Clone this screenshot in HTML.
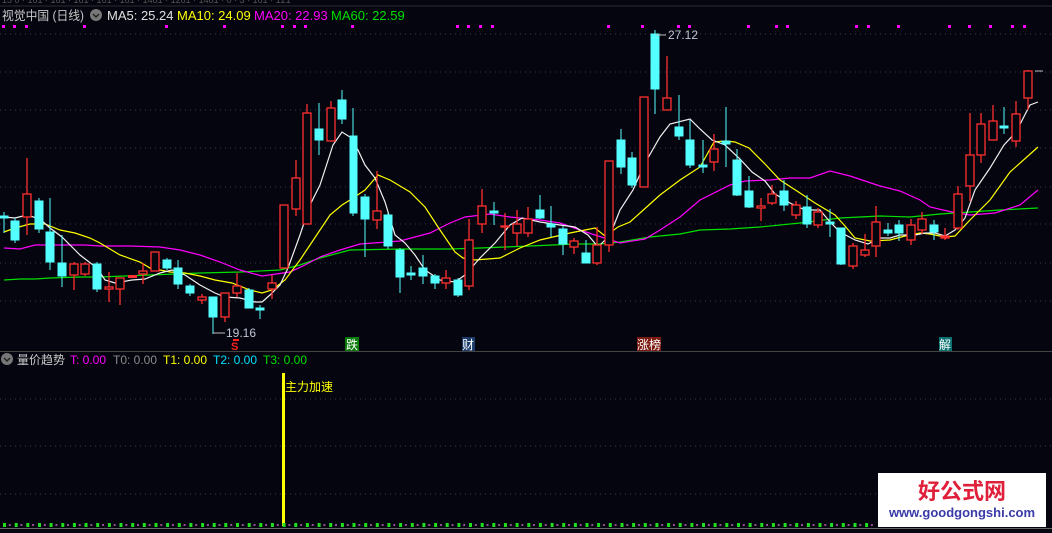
<!DOCTYPE html>
<html><head><meta charset="utf-8"><style>
html,body{margin:0;padding:0;background:#05050f;width:1052px;height:533px;overflow:hidden}
svg{display:block}
text{font-family:"Liberation Sans","Noto Sans CJK SC",sans-serif}
</style></head><body>
<svg width="1052" height="533" viewBox="0 0 1052 533" xmlns="http://www.w3.org/2000/svg">
<rect width="1052" height="533" fill="#05050f"/>
<line x1="0" y1="6" x2="1052" y2="6" stroke="#2a2a33"/>
<g fill="#555" font-size="9"><text x="2" y="3">15 0 · 161 · 161 · 161 · 161 · 161 · 1461 · 1261 · 1461 · 0 · 3 · 161 · 121</text></g>
<text x="2" y="20" font-size="12.5" fill="#c8c8c8" textLength="82" lengthAdjust="spacingAndGlyphs">视觉中国 (日线)</text>
<circle cx="96" cy="15" r="6" fill="#777"/><path d="M93 14l3 3 3-3" stroke="#222" stroke-width="1.5" fill="none"/>
<text x="107" y="20" font-size="13" fill="#e0e0e0">MA5: 25.24</text>
<text x="177" y="20" font-size="13" fill="#ffff00">MA10: 24.09</text>
<text x="254" y="20" font-size="13" fill="#ff00ff">MA20: 22.93</text>
<text x="331" y="20" font-size="13" fill="#00e000">MA60: 22.59</text>
<g fill="#ff00ff">
<rect x="2" y="25" width="3" height="3"/><rect x="13" y="25" width="3" height="3"/><rect x="25" y="25" width="3" height="3"/><rect x="83" y="25" width="3" height="3"/><rect x="165" y="25" width="3" height="3"/><rect x="223" y="25" width="3" height="3"/><rect x="281" y="25" width="3" height="3"/><rect x="293" y="25" width="3" height="3"/><rect x="304" y="25" width="3" height="3"/><rect x="351" y="25" width="3" height="3"/><rect x="456" y="25" width="3" height="3"/><rect x="467" y="25" width="3" height="3"/><rect x="479" y="25" width="3" height="3"/><rect x="491" y="25" width="3" height="3"/><rect x="607" y="25" width="3" height="3"/><rect x="641" y="25" width="3" height="3"/><rect x="677" y="25" width="3" height="3"/><rect x="688" y="25" width="3" height="3"/><rect x="747" y="25" width="3" height="3"/><rect x="775" y="25" width="3" height="3"/><rect x="786" y="25" width="3" height="3"/><rect x="855" y="25" width="3" height="3"/><rect x="867" y="25" width="3" height="3"/><rect x="897" y="25" width="3" height="3"/><rect x="948" y="25" width="3" height="3"/><rect x="968" y="25" width="3" height="3"/><rect x="989" y="25" width="3" height="3"/><rect x="1011" y="25" width="3" height="3"/><rect x="1023" y="25" width="3" height="3"/>
</g>
<g stroke="#3a3a48" stroke-dasharray="1,4">
<line x1="0" y1="34" x2="1052" y2="34"/><line x1="0" y1="72" x2="1052" y2="72"/><line x1="0" y1="110" x2="1052" y2="110"/><line x1="0" y1="148" x2="1052" y2="148"/><line x1="0" y1="187" x2="1052" y2="187"/><line x1="0" y1="224" x2="1052" y2="224"/><line x1="0" y1="263" x2="1052" y2="263"/><line x1="0" y1="301" x2="1052" y2="301"/>
<line x1="0" y1="399" x2="1052" y2="399"/><line x1="0" y1="446" x2="1052" y2="446"/><line x1="0" y1="494" x2="878" y2="494"/>
</g>
<g fill="none" stroke-width="1.2">
<polyline stroke="#00e000" points="4,280 20,279 35,279 50,278 80,277 100,277 150,275 200,273 240,272 280,270 300,265 320,258 350,250 400,249 450,249 480,248 530,246 575,244 600,244 620,242 650,237 680,234 700,230 730,229 760,227 800,223 840,218 880,216 910,217 940,214 970,212 1000,210 1038,208"/>
<polyline stroke="#ff00ff" points="4,248 20,249 35,245 60,245 85,245 100,246 130,246 160,247 180,250 200,255 220,262 240,270 262,276 290,272 305,265 320,257 340,250 360,244 400,241 430,233 450,223 465,217 490,214 510,217 540,220 560,223 580,230 595,235 620,243 645,239 660,230 680,217 700,200 730,185 745,181 770,180 790,178 810,178 830,171 850,176 880,186 900,191 920,200 930,207 952,212 970,215 995,213 1020,205 1038,190"/>
<polyline stroke="#ffff00" points="4,232 15,228 30,224 45,224 60,230 75,233 90,238 100,243 120,255 140,262 150,268 170,272 185,273 200,276 215,280 232,283 250,290 262,293 272,290 285,280 300,260 310,245 330,215 342,205 350,200 365,190 378,175 390,180 410,192 425,207 440,230 455,252 463,258 475,260 500,258 520,248 540,240 570,233 595,228 605,236 618,227 630,222 640,213 660,195 680,180 700,167 714,142 725,141 735,142 749,148 765,164 780,180 800,193 815,203 835,215 845,226 855,238 870,241 890,240 905,236 920,233 930,234 945,237 955,236 970,220 990,200 1010,172 1038,147"/>
<polyline stroke="#f0f0f0" points="4,217 15,218 27,215 40,219 50,228 62,237 72,247 80,255 97,268 105,280 115,283 132,280 145,279 160,273 172,270 185,275 200,285 215,293 225,297 240,298 255,302 262,302 270,295 280,285 288,268 300,235 310,205 320,185 333,145 342,132 350,137 358,150 365,165 375,178 385,202 395,235 405,243 415,255 425,270 440,280 455,282 465,275 480,258 495,243 510,225 522,218 540,222 560,225 575,227 588,235 598,247 610,235 620,210 633,190 645,163 660,137 670,124 690,119 700,129 712,140 725,145 740,159 752,172 765,181 775,194 790,203 805,210 820,210 830,222 840,232 855,240 868,244 880,238 890,238 900,235 915,235 925,233 935,233 945,236 955,230 965,218 975,190 990,168 1004,145 1016,132 1030,105 1038,102"/>
</g>
<g fill="#54ffff" stroke="#54ffff" stroke-width="1">
<line x1="4" y1="212" x2="4" y2="233"/><rect x="0" y="216" width="8" height="2"/>
<line x1="15" y1="218" x2="15" y2="243"/><rect x="11" y="221" width="8" height="19"/>
<line x1="39" y1="198" x2="39" y2="233"/><rect x="35" y="201" width="8" height="28"/>
<line x1="50" y1="198" x2="50" y2="270"/><rect x="46" y="232" width="8" height="30"/>
<line x1="62" y1="235" x2="62" y2="287"/><rect x="58" y="263" width="8" height="13"/>
<line x1="97" y1="262" x2="97" y2="292"/><rect x="93" y="264" width="8" height="25"/>
<line x1="167" y1="258" x2="167" y2="270"/><rect x="163" y="260" width="8" height="8"/>
<line x1="178" y1="260" x2="178" y2="289"/><rect x="174" y="268" width="8" height="16"/>
<line x1="190" y1="284" x2="190" y2="296"/><rect x="186" y="286" width="8" height="7"/>
<line x1="213" y1="297" x2="213" y2="334"/><rect x="209" y="297" width="8" height="20"/>
<line x1="249" y1="288" x2="249" y2="308"/><rect x="245" y="290" width="8" height="18"/>
<line x1="260" y1="305" x2="260" y2="319"/><rect x="256" y="308" width="8" height="2"/>
<line x1="319" y1="103" x2="319" y2="155"/><rect x="315" y="129" width="8" height="11"/>
<line x1="342" y1="90" x2="342" y2="124"/><rect x="338" y="100" width="8" height="19"/>
<line x1="353" y1="108" x2="353" y2="216"/><rect x="350" y="136" width="7" height="77"/>
<line x1="365" y1="194" x2="365" y2="257"/><rect x="361" y="197" width="8" height="22"/>
<line x1="388" y1="213" x2="388" y2="249"/><rect x="384" y="215" width="8" height="31"/>
<line x1="400" y1="248" x2="400" y2="293"/><rect x="396" y="250" width="8" height="27"/>
<line x1="411" y1="266" x2="411" y2="280"/><rect x="407" y="273" width="8" height="2"/>
<line x1="423" y1="255" x2="423" y2="284"/><rect x="419" y="268" width="8" height="8"/>
<line x1="435" y1="274" x2="435" y2="289"/><rect x="431" y="276" width="8" height="7"/>
<line x1="458" y1="278" x2="458" y2="297"/><rect x="454" y="280" width="8" height="15"/>
<line x1="494" y1="202" x2="494" y2="225"/><rect x="490" y="211" width="8" height="2"/>
<line x1="540" y1="195" x2="540" y2="219"/><rect x="536" y="210" width="8" height="8"/>
<line x1="551" y1="206" x2="551" y2="237"/><rect x="547" y="224" width="8" height="3"/>
<line x1="563" y1="226" x2="563" y2="255"/><rect x="559" y="229" width="8" height="15"/>
<line x1="586" y1="240" x2="586" y2="263"/><rect x="582" y="253" width="8" height="10"/>
<line x1="621" y1="129" x2="621" y2="174"/><rect x="617" y="140" width="8" height="27"/>
<line x1="632" y1="152" x2="632" y2="188"/><rect x="628" y="158" width="8" height="27"/>
<line x1="655" y1="30" x2="655" y2="114"/><rect x="651" y="34" width="8" height="55"/>
<line x1="679" y1="95" x2="679" y2="140"/><rect x="675" y="127" width="8" height="9"/>
<line x1="690" y1="120" x2="690" y2="168"/><rect x="686" y="140" width="8" height="25"/>
<line x1="703" y1="140" x2="703" y2="173"/><rect x="699" y="165" width="8" height="2"/>
<line x1="726" y1="107" x2="726" y2="167"/><rect x="722" y="141" width="8" height="3"/>
<line x1="737" y1="149" x2="737" y2="196"/><rect x="733" y="160" width="8" height="35"/>
<line x1="749" y1="176" x2="749" y2="208"/><rect x="745" y="191" width="8" height="16"/>
<line x1="784" y1="180" x2="784" y2="211"/><rect x="780" y="191" width="8" height="14"/>
<line x1="807" y1="195" x2="807" y2="228"/><rect x="803" y="207" width="8" height="17"/>
<line x1="830" y1="209" x2="830" y2="237"/><rect x="826" y="222" width="8" height="2"/>
<line x1="841" y1="228" x2="841" y2="265"/><rect x="837" y="228" width="8" height="36"/>
<line x1="888" y1="223" x2="888" y2="236"/><rect x="884" y="230" width="8" height="3"/>
<line x1="899" y1="220" x2="899" y2="241"/><rect x="895" y="225" width="8" height="8"/>
<line x1="934" y1="220" x2="934" y2="240"/><rect x="930" y="225" width="8" height="7"/>
<line x1="1004" y1="107" x2="1004" y2="134"/><rect x="1000" y="126" width="8" height="2"/>
</g>
<g fill="#05050f" stroke="#ff3030" stroke-width="1.3">
<line x1="27" y1="158" x2="27" y2="235"/><rect x="23" y="194" width="8" height="23"/>
<line x1="74" y1="262" x2="74" y2="290"/><rect x="70" y="264" width="8" height="11"/>
<line x1="85" y1="262" x2="85" y2="276"/><rect x="81" y="264" width="8" height="10"/>
<line x1="109" y1="272" x2="109" y2="302"/><rect x="105" y="287" width="8" height="2"/>
<line x1="120" y1="278" x2="120" y2="305"/><rect x="116" y="278" width="8" height="11"/>
<line x1="143" y1="263" x2="143" y2="284"/><rect x="139" y="271" width="8" height="3"/>
<line x1="155" y1="252" x2="155" y2="271"/><rect x="151" y="252" width="8" height="19"/>
<line x1="202" y1="294" x2="202" y2="304"/><rect x="198" y="297" width="8" height="3"/>
<line x1="225" y1="293" x2="225" y2="322"/><rect x="221" y="293" width="8" height="24"/>
<line x1="237" y1="273" x2="237" y2="297"/><rect x="233" y="286" width="8" height="7"/>
<line x1="272" y1="275" x2="272" y2="299"/><rect x="268" y="283" width="8" height="6"/>
<line x1="284" y1="205" x2="284" y2="268"/><rect x="280" y="205" width="8" height="63"/>
<line x1="296" y1="160" x2="296" y2="216"/><rect x="292" y="178" width="8" height="31"/>
<line x1="307" y1="104" x2="307" y2="224"/><rect x="303" y="113" width="8" height="111"/>
<line x1="331" y1="101" x2="331" y2="141"/><rect x="327" y="108" width="8" height="33"/>
<line x1="377" y1="171" x2="377" y2="229"/><rect x="373" y="211" width="8" height="9"/>
<line x1="446" y1="270" x2="446" y2="289"/><rect x="442" y="278" width="8" height="5"/>
<line x1="469" y1="219" x2="469" y2="290"/><rect x="465" y="240" width="8" height="46"/>
<line x1="482" y1="189" x2="482" y2="233"/><rect x="478" y="206" width="8" height="18"/>
<line x1="505" y1="213" x2="505" y2="250"/><rect x="501" y="226" width="8" height="1"/>
<line x1="517" y1="210" x2="517" y2="246"/><rect x="513" y="224" width="8" height="9"/>
<line x1="528" y1="207" x2="528" y2="237"/><rect x="524" y="219" width="8" height="14"/>
<line x1="574" y1="238" x2="574" y2="254"/><rect x="570" y="241" width="8" height="6"/>
<line x1="597" y1="227" x2="597" y2="265"/><rect x="593" y="245" width="8" height="18"/>
<line x1="609" y1="161" x2="609" y2="252"/><rect x="605" y="161" width="8" height="84"/>
<line x1="644" y1="97" x2="644" y2="187"/><rect x="640" y="97" width="8" height="90"/>
<line x1="667" y1="56" x2="667" y2="110"/><rect x="663" y="98" width="8" height="12"/>
<line x1="714" y1="134" x2="714" y2="171"/><rect x="710" y="149" width="8" height="13"/>
<line x1="761" y1="198" x2="761" y2="221"/><rect x="757" y="206" width="8" height="2"/>
<line x1="772" y1="185" x2="772" y2="205"/><rect x="768" y="194" width="8" height="9"/>
<line x1="796" y1="201" x2="796" y2="219"/><rect x="792" y="205" width="8" height="10"/>
<line x1="818" y1="208" x2="818" y2="228"/><rect x="814" y="212" width="8" height="13"/>
<line x1="853" y1="243" x2="853" y2="269"/><rect x="849" y="246" width="8" height="20"/>
<line x1="865" y1="234" x2="865" y2="257"/><rect x="861" y="250" width="8" height="5"/>
<line x1="876" y1="206" x2="876" y2="257"/><rect x="872" y="222" width="8" height="24"/>
<line x1="911" y1="219" x2="911" y2="245"/><rect x="907" y="225" width="8" height="15"/>
<line x1="922" y1="212" x2="922" y2="234"/><rect x="918" y="219" width="8" height="11"/>
<line x1="945" y1="228" x2="945" y2="240"/><rect x="941" y="236" width="8" height="2" fill="#ff3030"/>
<line x1="958" y1="186" x2="958" y2="230"/><rect x="954" y="194" width="8" height="34"/>
<line x1="970" y1="113" x2="970" y2="201"/><rect x="966" y="155" width="8" height="31"/>
<line x1="981" y1="113" x2="981" y2="163"/><rect x="977" y="124" width="8" height="31"/>
<line x1="993" y1="105" x2="993" y2="140"/><rect x="989" y="121" width="8" height="19"/>
<line x1="1016" y1="101" x2="1016" y2="147"/><rect x="1012" y="114" width="8" height="27"/>
<line x1="1028" y1="70" x2="1028" y2="110"/><rect x="1024" y="71" width="8" height="27"/>
</g>
<rect x="128" y="275" width="9" height="3" fill="#ff3030"/>
<line x1="1035" y1="71" x2="1043" y2="71" stroke="#bbb"/>
<path d="M656 35h10" stroke="#bbb"/><text x="668" y="39" font-size="12" fill="#c0c8d8">27.12</text>
<path d="M213 333h12" stroke="#bbb"/><text x="226" y="337" font-size="12" fill="#c0c8d8">19.16</text>
<text x="231" y="350" font-size="11" fill="#ff2020" font-weight="bold">S</text>
<rect x="233" y="339" width="6" height="2" fill="#ff2020"/>
<rect x="345" y="337" width="14" height="14" fill="#0a7a0a"/><text x="346" y="349" font-size="12" fill="#fff">跌</text>
<rect x="462" y="337" width="13" height="14" fill="#1a3a6a"/><text x="462" y="349" font-size="12" fill="#fff">财</text>
<rect x="637" y="337" width="24" height="14" fill="#7a1a10"/><text x="637" y="349" font-size="12" fill="#fff">涨榜</text>
<rect x="939" y="337" width="13" height="14" fill="#0a7070"/><text x="939" y="349" font-size="12" fill="#fff">解</text>
<line x1="0" y1="351.5" x2="1052" y2="351.5" stroke="#444"/>
<circle cx="7" cy="359" r="6" fill="#777"/><path d="M4 358l3 3 3-3" stroke="#222" stroke-width="1.5" fill="none"/>
<text x="17" y="364" font-size="12" fill="#c8c8c8">量价趋势</text>
<text x="70" y="364" font-size="12" fill="#ff00ff">T: 0.00</text>
<text x="113" y="364" font-size="12" fill="#8a8a8a">T0: 0.00</text>
<text x="163" y="364" font-size="12" fill="#ffff00">T1: 0.00</text>
<text x="213" y="364" font-size="12" fill="#00e0ff">T2: 0.00</text>
<text x="263" y="364" font-size="12" fill="#00e000">T3: 0.00</text>
<rect x="282" y="373" width="3" height="153" fill="#ffff00"/>
<text x="285" y="391" font-size="12" fill="#ffff00">主力加速</text>
<g id="dots"></g>
<line x1="0" y1="528.5" x2="1052" y2="528.5" stroke="#666"/>
<text x="2" y="541" font-size="11" fill="#ccc">MACD(12,26,9) DIF: 0.00 <tspan fill="#ffff00">DEA: 0.07</tspan> <tspan fill="#ff00ff">MACD: 0.07</tspan></text>
<rect x="878" y="473" width="168" height="54" fill="#fff"/>
<text x="962" y="499" font-size="22" font-weight="bold" fill="#e0203a" text-anchor="middle">好公式网</text>
<text x="962" y="517" font-size="13" font-weight="bold" fill="#3a3aa8" text-anchor="middle">www.goodgongshi.com</text>
</svg>
<script>
var g=document.getElementById('dots'),s='';
for(var i=0;i<76;i++){var x=3+i*11.65;if(x>876)break;s+='<rect x="'+x.toFixed(1)+'" y="523" width="3" height="4" fill="#20e020"/>';s+='<rect x="'+(x+5.8).toFixed(1)+'" y="524" width="2" height="2" fill="#905090"/>';}
g.innerHTML=s;
</script>
</body></html>
